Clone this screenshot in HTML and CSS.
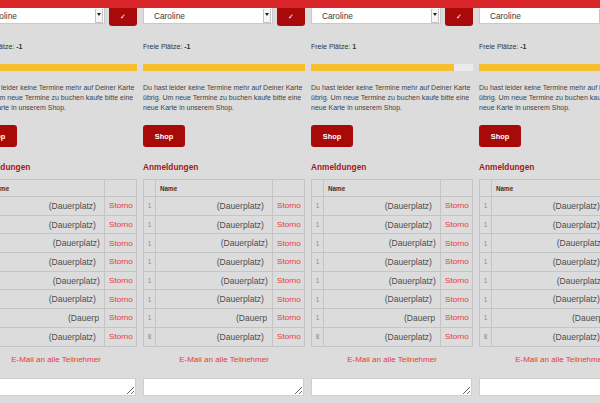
FILE: index.html
```html
<!DOCTYPE html>
<html lang="de">
<head>
<meta charset="utf-8">
<title>Anmeldungen</title>
<link rel="stylesheet" href="styles.css">
</head>
<body>
<div class="topbar"></div>
<div class="board">

  <section class="col">
    <div class="controls">
      <div class="select"><span class="sel-text">Caroline</span><span class="sel-arrow"></span></div>
      <button class="check">✓</button>
    </div>
    <p class="free">Freie Plätze: <b>-1</b></p>
    <div class="bar"><div class="fill" style="width:100%"></div></div>
    <p class="msg">Du hast leider keine Termine mehr auf Deiner Karte übrig. Um neue Termine zu buchen kaufe bitte eine neue Karte in unserem Shop.</p>
    <button class="shop">Shop</button>
    <h3 class="title">Anmeldungen</h3>
    <table class="list">
      <tr class="head"><th class="num"></th><th class="name">Name</th><th class="act"></th></tr>
      <tr><td class="num">1</td><td class="name">(Dauerplatz)</td><td class="act">Storno</td></tr>
      <tr><td class="num">1</td><td class="name">(Dauerplatz)</td><td class="act">Storno</td></tr>
      <tr><td class="num">1</td><td class="name shift">(Dauerplatz)</td><td class="act">Storno</td></tr>
      <tr><td class="num">1</td><td class="name">(Dauerplatz)</td><td class="act">Storno</td></tr>
      <tr><td class="num">1</td><td class="name shift">(Dauerplatz)</td><td class="act">Storno</td></tr>
      <tr><td class="num">1</td><td class="name">(Dauerplatz)</td><td class="act">Storno</td></tr>
      <tr><td class="num">1</td><td class="name shift2">(Dauerp</td><td class="act">Storno</td></tr>
      <tr><td class="num">8</td><td class="name">(Dauerplatz)</td><td class="act">Storno</td></tr>
    </table>
    <a class="mail">E-Mail an alle Teilnehmer</a>
    <textarea class="note"></textarea>
  </section>

  <section class="col">
    <div class="controls">
      <div class="select"><span class="sel-text">Caroline</span><span class="sel-arrow"></span></div>
      <button class="check">✓</button>
    </div>
    <p class="free">Freie Plätze: <b>-1</b></p>
    <div class="bar"><div class="fill" style="width:100%"></div></div>
    <p class="msg">Du hast leider keine Termine mehr auf Deiner Karte übrig. Um neue Termine zu buchen kaufe bitte eine neue Karte in unserem Shop.</p>
    <button class="shop">Shop</button>
    <h3 class="title">Anmeldungen</h3>
    <table class="list">
      <tr class="head"><th class="num"></th><th class="name">Name</th><th class="act"></th></tr>
      <tr><td class="num">1</td><td class="name">(Dauerplatz)</td><td class="act">Storno</td></tr>
      <tr><td class="num">1</td><td class="name">(Dauerplatz)</td><td class="act">Storno</td></tr>
      <tr><td class="num">1</td><td class="name shift">(Dauerplatz)</td><td class="act">Storno</td></tr>
      <tr><td class="num">1</td><td class="name">(Dauerplatz)</td><td class="act">Storno</td></tr>
      <tr><td class="num">1</td><td class="name shift">(Dauerplatz)</td><td class="act">Storno</td></tr>
      <tr><td class="num">1</td><td class="name">(Dauerplatz)</td><td class="act">Storno</td></tr>
      <tr><td class="num">1</td><td class="name shift2">(Dauerp</td><td class="act">Storno</td></tr>
      <tr><td class="num">8</td><td class="name">(Dauerplatz)</td><td class="act">Storno</td></tr>
    </table>
    <a class="mail">E-Mail an alle Teilnehmer</a>
    <textarea class="note"></textarea>
  </section>

  <section class="col">
    <div class="controls">
      <div class="select"><span class="sel-text">Caroline</span><span class="sel-arrow"></span></div>
      <button class="check">✓</button>
    </div>
    <p class="free">Freie Plätze: <b>1</b></p>
    <div class="bar"><div class="fill" style="width:88%"></div></div>
    <p class="msg">Du hast leider keine Termine mehr auf Deiner Karte übrig. Um neue Termine zu buchen kaufe bitte eine neue Karte in unserem Shop.</p>
    <button class="shop">Shop</button>
    <h3 class="title">Anmeldungen</h3>
    <table class="list">
      <tr class="head"><th class="num"></th><th class="name">Name</th><th class="act"></th></tr>
      <tr><td class="num">1</td><td class="name">(Dauerplatz)</td><td class="act">Storno</td></tr>
      <tr><td class="num">1</td><td class="name">(Dauerplatz)</td><td class="act">Storno</td></tr>
      <tr><td class="num">1</td><td class="name shift">(Dauerplatz)</td><td class="act">Storno</td></tr>
      <tr><td class="num">1</td><td class="name">(Dauerplatz)</td><td class="act">Storno</td></tr>
      <tr><td class="num">1</td><td class="name shift">(Dauerplatz)</td><td class="act">Storno</td></tr>
      <tr><td class="num">1</td><td class="name">(Dauerplatz)</td><td class="act">Storno</td></tr>
      <tr><td class="num">1</td><td class="name shift2">(Dauerp</td><td class="act">Storno</td></tr>
      <tr><td class="num">8</td><td class="name">(Dauerplatz)</td><td class="act">Storno</td></tr>
    </table>
    <a class="mail">E-Mail an alle Teilnehmer</a>
    <textarea class="note"></textarea>
  </section>

  <section class="col">
    <div class="controls">
      <div class="select"><span class="sel-text">Caroline</span><span class="sel-arrow"></span></div>
      <button class="check">✓</button>
    </div>
    <p class="free">Freie Plätze: <b>-1</b></p>
    <div class="bar"><div class="fill" style="width:100%"></div></div>
    <p class="msg">Du hast leider keine Termine mehr auf Deiner Karte übrig. Um neue Termine zu buchen kaufe bitte eine neue Karte in unserem Shop.</p>
    <button class="shop">Shop</button>
    <h3 class="title">Anmeldungen</h3>
    <table class="list">
      <tr class="head"><th class="num"></th><th class="name">Name</th><th class="act"></th></tr>
      <tr><td class="num">1</td><td class="name">(Dauerplatz)</td><td class="act">Storno</td></tr>
      <tr><td class="num">1</td><td class="name">(Dauerplatz)</td><td class="act">Storno</td></tr>
      <tr><td class="num">1</td><td class="name shift">(Dauerplatz)</td><td class="act">Storno</td></tr>
      <tr><td class="num">1</td><td class="name">(Dauerplatz)</td><td class="act">Storno</td></tr>
      <tr><td class="num">1</td><td class="name shift">(Dauerplatz)</td><td class="act">Storno</td></tr>
      <tr><td class="num">1</td><td class="name">(Dauerplatz)</td><td class="act">Storno</td></tr>
      <tr><td class="num">1</td><td class="name shift2">(Dauerp</td><td class="act">Storno</td></tr>
      <tr><td class="num">8</td><td class="name">(Dauerplatz)</td><td class="act">Storno</td></tr>
    </table>
    <a class="mail">E-Mail an alle Teilnehmer</a>
    <textarea class="note"></textarea>
  </section>

</div>
</body>
</html>
```

FILE: styles.css
```css
html, body {
  margin: 0;
  padding: 0;
  height: 100%;
  overflow: hidden;
  background: #dcdcdc;
  font-family: "Liberation Sans", Arial, sans-serif;
  color: #444;
}

.topbar {
  height: 8px;
  background: #d8262b;
}

.board {
  display: flex;
  gap: 6px;
  margin-left: -25px;
}

.col {
  flex: 0 0 162px;
  width: 162px;
  display: flex;
  flex-direction: column;
  align-items: flex-start;
}

.controls {
  display: flex;
  gap: 4px;
  align-items: flex-start;
  height: 18px;
}

.select {
  width: 130px;
  height: 16px;
  box-sizing: border-box;
  background: #fff;
  border: 1px solid #c9c9c9;
  border-top: none;
  display: flex;
  align-items: center;
  justify-content: space-between;
  padding-left: 10px;
  padding-right: 1px;
}

.sel-text {
  font-size: 8.3px;
  color: #3a3a3a;
}

.sel-arrow {
  position: relative;
  width: 8px;
  height: 14px;
  box-sizing: border-box;
  border: 1px solid #c4c4c4;
  border-top: none;
  background: #f6f6f6;
}

.sel-arrow::after {
  content: "";
  position: absolute;
  left: 1px;
  top: 4px;
  border-left: 2px solid transparent;
  border-right: 2px solid transparent;
  border-top: 3px solid #222;
}

.check {
  width: 28px;
  height: 18px;
  margin: 0;
  padding: 0;
  border: none;
  border-radius: 0 0 3px 3px;
  background: #a80a0a;
  color: #fff;
  font-family: "DejaVu Sans", sans-serif;
  font-size: 7px;
  font-weight: bold;
  line-height: 18px;
}

.free {
  margin: 16px 0 0;
  font-size: 7px;
  line-height: 10px;
  color: #333;
}

.free b {
  font-weight: bold;
}

.bar {
  margin-top: 12px;
  width: 100%;
  height: 7px;
  background: #ebebeb;
}

.fill {
  height: 100%;
  background: #f5bf2f;
}

.msg {
  margin: 12px 0 0;
  font-size: 7px;
  line-height: 10px;
  color: #444;
  width: 162px;
}

.shop {
  margin-top: 12px;
  width: 42px;
  height: 22px;
  padding: 0;
  border: none;
  border-radius: 3px;
  background: #a80a0a;
  color: #fff;
  font-family: "Liberation Sans", Arial, sans-serif;
  font-size: 7.4px;
  font-weight: bold;
}

.title {
  margin: 14px 0 0;
  font-size: 8.3px;
  line-height: 12px;
  font-weight: bold;
  color: #a3171b;
}

.list {
  margin-top: 6px;
  width: 162px;
  border-collapse: collapse;
  table-layout: fixed;
}

.list th, .list td {
  border: 1px solid #c5c5c5;
  padding: 0;
  height: 18.7px;
  box-sizing: border-box;
}

.list .head th {
  height: 17px;
}

.list .num {
  width: 12px;
  text-align: center;
  font-size: 6.5px;
  color: #888;
}

.list th.name {
  text-align: left;
  padding-left: 4px;
  font-size: 6.3px;
  font-weight: bold;
  color: #333;
}

.list td.name {
  text-align: right;
  padding-right: 8px;
  font-size: 8.6px;
  color: #4e4e4e;
  white-space: nowrap;
  overflow: hidden;
}

.list td.name.shift {
  padding-right: 4px;
}

.list td.name.shift2 {
  padding-right: 5px;
}

.list .act {
  width: 32px;
  padding-left: 4px;
  font-size: 8.1px;
  color: #e6393c;
  text-align: left;
}

.mail {
  align-self: center;
  margin-top: 7px;
  font-size: 8px;
  line-height: 12px;
  color: #e0403c;
}

.note {
  margin: 12px 0 0;
  width: 161px;
  height: 18px;
  box-sizing: border-box;
  background: #fff;
  border: 1px solid #cfcfcf;
  padding: 0;
}
```
